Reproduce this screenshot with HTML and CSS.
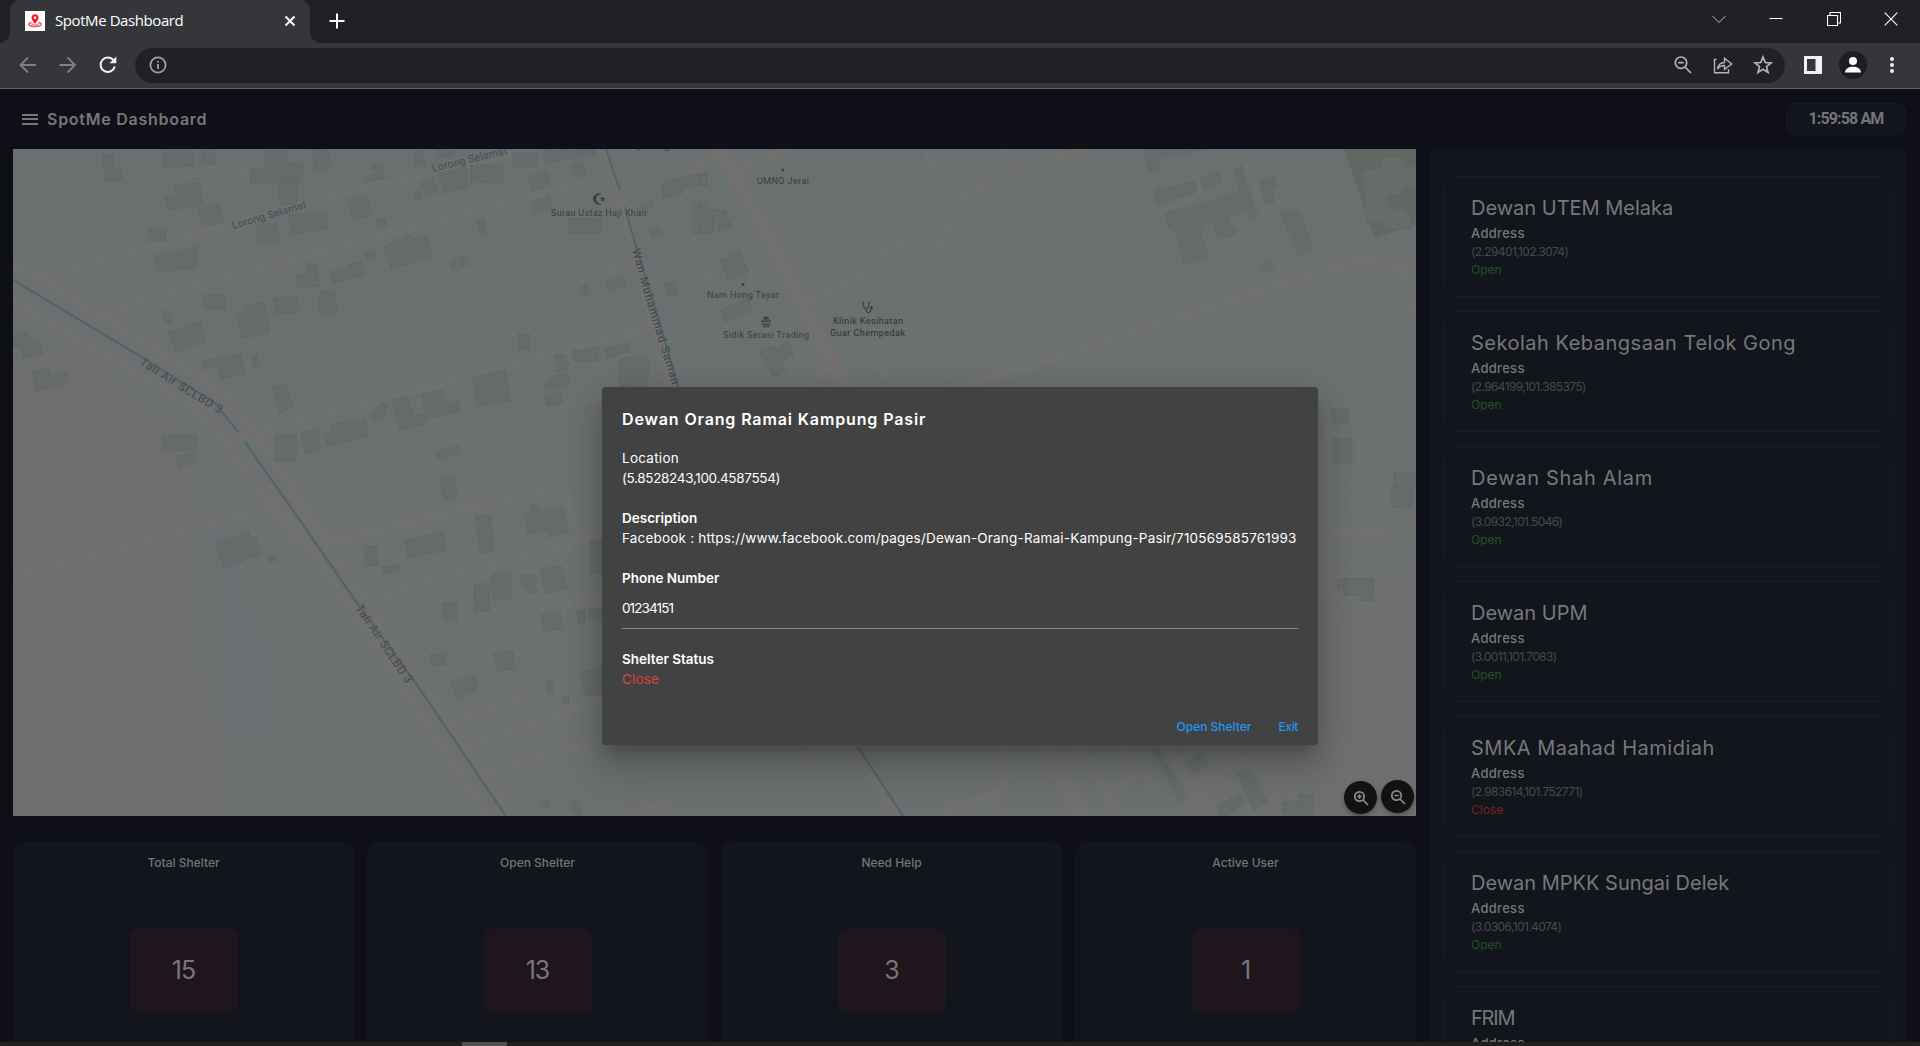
FILE: index.html
```html
<!DOCTYPE html>
<html lang="en">
<head>
<meta charset="utf-8">
<title>SpotMe Dashboard</title>
<link rel="stylesheet" href="styles.css">
</head>
<body>
<div class="browser">
  <div class="tabs">
    <div class="tab">
      <svg class="favicon" viewBox="0 0 20 20"><rect width="20" height="20" fill="#fff"/><path d="M6.6 11.4C2 12.6 3 15.6 10 15.6s8-3 3.4-4.200" fill="none" stroke="#f0484c" stroke-width="1.300"/><path d="M7.500 12.300c-2 .9-.5 1.700 2.500 1.700s4.500-.8 2.500-1.700" fill="none" stroke="#f0484c"/><path d="M10 13C7.800 9.800 6.500 8.500 6.500 6.700a3.500 3.500 0 0 1 7 0C13.500 8.500 12.200 9.800 10 13z" fill="#ee1c23"/><circle cx="10" cy="6.700" r="1.300" fill="#fff"/></svg>
      <span class="tab-title">SpotMe Dashboard</span>
      <svg class="tab-close" viewBox="0 0 12 12"><path d="M1.500 1.500l9 9M10.500 1.500l-9 9"/></svg>
      <i class="curve curve-left"></i><i class="curve curve-right"></i>
    </div>
    <svg class="plus" viewBox="0 0 16 16"><path d="M8 .5v15M.5 8h15"/></svg>
    <div class="window-buttons">
      <svg class="thin" viewBox="0 0 14 14"><path d="M.5 4l6.500 6.500L13.500 4"/></svg>
      <svg viewBox="0 0 14 14"><path d="M.5 6.500h13"/></svg>
      <svg viewBox="0 0 14 14"><path d="M.5 3.500h10v10h-10zM3 3V.5h10.500V11H11"/></svg>
      <svg viewBox="0 0 14 14"><path d="M.7.7l12.600 12.600M13.300.7L.7 13.300"/></svg>
    </div>
  </div>
  <div class="toolbar">
    <svg class="nav dim" viewBox="0 0 20 20"><path d="M18 10H3M10 2.500L2.500 10l7.500 7.500"/></svg>
    <svg class="nav dim" viewBox="0 0 20 20"><path d="M1.500 10h15M9.500 2.500L17 10l-7.500 7.500"/></svg>
    <svg class="nav" viewBox="0 0 20 20"><path d="M16.800 11.500a7.200 7.200 0 1 1-1.300-6.200" stroke-width="2"/><path d="M18.300 1.500v6.800h-6.800z" fill="#f1f1f1" stroke="none"/></svg>
    <div class="address">
      <svg class="info" viewBox="0 0 18 18"><circle cx="9" cy="9" r="7.600"/><path d="M9 8v5M9 5v1.600"/></svg>
      <div class="address-actions">
        <svg viewBox="0 0 20 20"><circle cx="8" cy="7.700" r="5.700"/><path d="M5.300 7.700h5.400M12 12l6 6"/></svg>
        <svg viewBox="0 0 20 20"><path d="M3.500 4.500h-2v13.300h14v-3.500M4.500 14c.6-4.200 3-6.300 7-6.500V3.200L18.700 9l-7.200 5.300v-3.800c-3 .1-5.200 1-7 3.500z" stroke-width="1.400"/></svg>
        <svg viewBox="0 0 20 20"><path d="M10 2l2.200 5.500 5.900.4-4.600 3.700 1.500 5.800-5-3.200-5 3.200 1.500-5.800L1.900 7.900l5.900-.4z"/></svg>
      </div>
    </div>
    <svg class="panel-icon" viewBox="0 0 18 18"><path d="M0 0h18v18H0z" fill="#f1f1f1"/><path d="M3 3h8.500v12H3z" fill="#35363a"/></svg>
    <svg class="profile" viewBox="0 0 28 28"><circle cx="14" cy="14" r="14" fill="#1d1e21"/><circle cx="14" cy="10" r="4" fill="#fff"/><path d="M6 21.500c0-7.700 16-7.700 16 0z" fill="#fff"/></svg>
    <svg class="dots" viewBox="0 0 6 18"><circle cx="3" cy="3" r="2"/><circle cx="3" cy="9" r="2"/><circle cx="3" cy="15" r="2"/></svg>
  </div>

  <div class="page">
    <header class="header">
      <i class="burger"></i>
      <h1 class="brand">SpotMe Dashboard</h1>
      <div class="clock">1:59:58 AM</div>
    </header>
    <main class="content">
      <section class="left">
        <div class="map">
          <svg class="map-canvas" viewBox="13 149 1403 667">
            <defs>
              <linearGradient id="land" x1="0" y1="0" x2="0" y2="1"><stop offset="0" stop-color="#6a6f6f"/><stop offset=".7" stop-color="#6b7071"/><stop offset="1" stop-color="#6b6f70"/></linearGradient>
              <linearGradient id="west" x1="0" y1="0" x2="1" y2="0"><stop offset="0" stop-color="#6e6e70"/><stop offset=".35" stop-color="#6d6e70"/><stop offset="1" stop-color="#6d6e70" stop-opacity="0"/></linearGradient>
              <linearGradient id="east" x1="0" y1="0" x2="0" y2="1"><stop offset="0" stop-color="#6e6f71" stop-opacity="0"/><stop offset=".4" stop-color="#6e6f71"/><stop offset="1" stop-color="#6e6f71"/></linearGradient>
            </defs>
            <rect x="13" y="149" width="1403" height="667" fill="url(#land)"/>
            <path d="M13 365L75 345 190 430 330 816H13z" fill="url(#west)"/>
            <rect x="1180" y="480" width="236" height="336" fill="url(#east)"/>

            <g class="roads">
              <g transform="translate(0 140) scale(.4592 .33333)">
                <path class="r9" d="M90 410L330 320 720 170 1180 20"/>
                <path class="r9" d="M215 530L330 470 850 280 1330 105"/>
                <path class="r10" d="M0 350L110 435 300 597 470 745Q510 785 545 860L715 1205"/>
                <path class="r10" d="M0 460L130 567 390 775 470 860 640 1205"/>
                <path class="r9" d="M510 892L800 790 1420 560"/>
                <path class="r8" d="M525 10L541 230M380 118Q430 92 520 75M955 260L978 375M1190 390Q1250 358 1290 400Q1360 385 1375 330"/>
                <path class="r10" d="M1305 0L1365 250 1465 760"/>
                <path class="r6" d="M1565 60L1350 185M28 680Q140 650 165 605M1535 385L1570 480"/>
                <path class="r8" d="M1230 800L1320 775M300 1205L600 1105M740 1205L1190 1050Q1230 1040 1240 1090L1265 1205"/>
              </g>
              <g transform="translate(0 500) scale(.4592 .33333)">
                <path class="r10" d="M637 -10L1125 960M590 -30L1070 960"/>
                <path class="r9" d="M0 240L600 20M720 118L1060 5M820 300Q920 235 1080 190L1330 105M1240 310L1320 285M990 660L1160 580M1020 730Q1190 670 1320 590M1070 820Q1170 760 1280 735M1330 960L1450 915"/>
              </g>
              <g transform="translate(700 140) scale(.4592 .33333)">
                <path class="main-road" d="M35 0L170 350 320 760"/>
                <path class="r9" d="M80 90L200 20M-20 80L40 50M490 20L510 95M660 20L675 90M850 25L675 90 550 190Q543 300 513 320M235 485L345 410 365 365 455 300"/>
                <path class="r10" d="M540 750L700 685 1270 430 1430 365Q1470 350 1510 385L1568 360M1530 385L1548 505"/>
                <path class="r6" d="M130 210L205 170 208 130M150 255L195 232M170 255L190 320Q210 340 240 300Q250 270 230 240M200 385L308 308M425 408L480 372Q500 370 505 400L525 470M285 640L470 520 625 410 730 355 900 265 958 235M728 370L742 440M808 320L825 392M903 275L942 432M925 345L955 322M545 470Q550 520 575 500L600 490Q630 510 637 605L572 648M630 410L700 680M465 520Q480 560 440 585L365 630 400 705M405 435L330 475Q310 490 320 520M120 320Q85 340 115 410Q115 440 85 430M195 570Q215 620 210 650Q230 670 280 650M270 690Q240 720 265 760M0 380L30 470"/>
                <path class="r6" d="M960 20L975 90M1170 45Q1190 60 1200 110L1275 425M1165 45L1000 115Q970 140 978 170L1030 390Q1035 415 1070 405L1245 322M990 218L1090 165 1080 90M1200 100L1250 85Q1275 140 1270 175L1225 210M1115 320L1230 260"/>
              </g>
              <g transform="translate(1300 380) scale(.33333)">
                <path class="r9" d="M85 120Q70 350 80 500Q90 640 102 720M70 460Q250 460 360 435"/>
              </g>
              <g transform="translate(700 730) scale(.4655 .33333)">
                <path class="main-road" d="M730 20L825 270"/>
                <path class="r9" d="M305 10L430 270M655 20V140Q655 180 600 210L500 265M620 205L650 265M810 40L910 270M900 30L975 170M990 20L1100 270M1080 150L1220 50M1235 30L1232 270M875 185L935 130M210 80L310 40"/>
              </g>
            </g>

            <g class="buildings">
              <g transform="translate(0 140) scale(.4592 .33333)">
                <path d="M222 45l24-3 3 45 16 5 2 27-37 6zM355 20h66v57l-66 3zM438 20h30l2 54-30-8zM575 34l52-4v40l33 2-3 55-113 2 3-43 29-2zM676 30l37-8 9 60-35 8zM811 70l22 2v22l-22-2zM797 107l34-12 8 20-43 8zM360 173l24-5-3-30 54-9 6 65-77 18zM431 205l46-13 12 55-47 13zM608 128l42 2-5 65-36-4zM560 255l44-4 4 58-46 4zM628 225l84-9 2 50-80 16zM758 182l43-17 10 58-43 19zM325 268h36v36h-36zM338 348l90-30 3 44-6 28-30-4-52 12zM820 240l18-3 3 24-19 3zM835 323l54-40 10 15 30-10 13 57-89 44zM797 335h20l2 24h-23zM900 38l20-5 6 40-22 8zM950 25h38v26l-38 2zM957 98l58-18 5 62-55 18zM918 130l25-16 11 40-25 14zM900 155l15-3 3 22-14 5zM1025 76l70-3-1 53h-70zM1116 40l52-2v40l-52 4zM1150 112l40-20 10 40-40 22zM1240 76l26-14 10 34-20 16zM1186 30h112v10l-108 28zM1158 185l38-15 7 35-40 16zM1038 240l16-3 3 45h-15zM1240 235h68v46h-68zM980 368l15-10-5 28h-10zM1000 350l14-6 6 30-18 5zM645 405l20-5 3-28h24l2 65-45 6zM718 397l40-14v-8l30-12 8 40-72 28zM443 466l48-2v42l-46 1zM515 520l16-3 1-20 44-11 12 92-62 18zM596 475l52-3 3 45-52 4zM691 480l7-25 30-6 7 72-37 9zM355 515l15-5 5 34-15 4zM366 577l70-34 12 60-66 32zM440 663l85-20 9 60-52 14-10-40-31 10zM549 650l12-8 4 36-12 8zM593 742l30-13 16 73-30 18zM28 588l30-14 10 27 20 2 6 38-45 14-3-35-18 2zM70 697l36-11 4 18 35-7 3 35-69 22zM354 888l74-3-1 45-73 3zM382 950l42-14 4 30-38 15zM600 886l46-5-1 80-45 4zM655 880l35-14 10 66-35 10zM708 885l17-3-3-30 74-16 5 55-90 27zM806 830l25-42 13 3-10 52-25-10zM855 780l33-16 12 62 24-4 3 30-56 18zM918 765l42-16 10 42 29-10 3 32-74 24zM1028 715l73-26 9 95-70 14zM1129 583h25v43h-25zM1210 645h18v20h10l-2 28-24 3zM1248 633l55-13v42l-53 3zM1315 625l54-16 5 26-52 20zM1350 655l62-8v75l-8 18h-55zM1184 735l16-25 38-10 2 35-53 18zM1187 765l34-10 5 35-36 8zM1263 442l14-8 8 25-15 10zM1320 425l37-20 7 32-37 18zM948 936l51-18 3 22-48 20zM957 1015l34-8 4 65-30 6zM1448 432l20-6 6 40-20 4zM1440 130l30-15 70-15v35l-50 5-5 22-42 12zM1385 205l35-26v20l-30 20zM1415 270l24-6 4 22-24 6zM1510 185l30 3-3 35 18 3v50l-45 6z"/>
              </g>
              <g transform="translate(0 500) scale(.4592 .33333)">
                <path d="M468 127l74-31 5 20 12-2 11 48-82 42zM582 175l18-8 4 16-17 6zM793 138h28v60h-28zM880 121l85-24 6 54-82 22zM830 202l40-10 3 20-40 9zM1035 50l34-4 8 110-32 4zM1144 47l12-3v-28l16-6 4 25 50-17 13 80-45 14-3-20-42 8zM1285 120h30v100h-30zM1175 208l48-12 12 72-48 12zM1070 222l42-3v77l-40 4zM1032 254l34-4v83h-34zM1132 228l32-3 4 52-20 2v-20l-13-4zM964 308l31 2v50h-31zM1178 345l44-10 4 52-43 8zM1256 332h18v35l-14 2zM1282 328h30v28h-30zM937 464l33-3v34l-31 2zM1075 460l42-6 6 53-38 8zM980 548l50-24 12 40-45 32zM1190 542l14 1v35l-12-2zM1263 518l47-18v80l-35 8zM1225 594l14-3v18l-12 4zM1176 904l20-4v24l-16 3zM1238 910l15-14 15 42-12 8z"/>
              </g>
              <g transform="translate(700 140) scale(.4592 .33333)">
                <path d="M0 105h16v30H0zM0 185h14v25h43v25H28v45H0zM36 248l20-18 14 25-28 20zM43 360l44-24 18 58-44 26zM43 512l62-38 8 38-60 34zM130 638l27-20 8 10 28-24 10 38-24 22 8 28-27 20zM965 40V27h140l-102 25-2 40-25 4zM989 152l90-30 4 32-88 38zM1090 112l38-18 8 30-38 18zM1010 222l165-67 12 58-38 20 5 30 12-2 5 20-40 14-17-50-27 12 18 90-50 30-22-110-12-3zM1163 90l15-12 35 152-15 12zM1218 125l32-16 7 30-14 6 10 45-20 5zM1262 215l20-10 5 15 18-10 30 118-32 18zM1218 374l20-14 10 26-20 15z"/>
                <path class="park" d="M1402 27h166v222l-98 46z"/>
                <path class="lot" d="M1442 90l40-5v-33h52v28l34-4v66l-36 3v20h-32v44l30-5 18 20v42l-55 3-15-24-25 8z"/>
              </g>
              <g transform="translate(1300 380) scale(.33333)">
                <path d="M94 88h50v43H98zM98 175h58v75h-58zM282 277h66v43h-66zM275 322l66 4-4 60-62-5zM112 597h18v32h-18zM132 595h90v67h-41v-15h-49zM0 1245h38l-5 65H0z"/>
              </g>
              <g transform="translate(700 730) scale(.4655 .33333)">
                <path d="M967 60l15-8 12 48 8-2 46 100-18 18-42-115zM1042 98l34-32 17 38-30 28zM1155 130l25-16 40 100-30 28-12-32zM1110 228l48-38 15 28-40 38h-15zM1250 216l36-2 2-20 30 5-3 60-65-8z"/>
              </g>
            </g>

            <g class="river">
              <path d="M13 280L138 355 215 403 238 432M245 442L315 542 357 603 415 682 506 816M606 149L620 191M625 207L637 250 656 310 678 387M858 747L903 816"/>
            </g>

            <g class="labels">
              <text class="street" x="233" y="229" transform="rotate(-16 233 229)" textLength="77">Lorong Selamat</text>
              <text class="street" x="433" y="172" transform="rotate(-14 433 172)" textLength="77">Lorong Selamat</text>
              <path id="tali1" fill="none" d="M139 364L190 396 230 420"/>
              <path id="tali2" fill="none" d="M355 608L380 645 412 692"/>
              <path id="wan" fill="none" d="M632 250L648 307 674 390"/>
              <text class="water"><textPath href="#tali1" textLength="95">Tali Air SCLBD 3</textPath></text>
              <text class="water"><textPath href="#tali2" textLength="92">Tali Air SCLBD 3</textPath></text>
              <text class="way"><textPath href="#wan" textLength="141">Wan Muhammad Saman</textPath></text>
              <text class="poi" x="551" y="216" textLength="96">Surau Ustaz Haji Khair</text>
              <text class="poi" x="627" y="149" textLength="70">Tays Seng Motor</text>
              <text class="poi" x="757" y="184" textLength="52">UMNO Jerai</text>
              <text class="poi" x="707" y="298" textLength="72">Nam Hong Tayar</text>
              <text class="poi" x="723" y="338" textLength="86">Sidik Serasi Trading</text>
              <text class="poi strong" x="833" y="324" textLength="70">Klinik Kesihatan</text>
              <text class="poi strong" x="830" y="336" textLength="75">Guar Chempedak</text>
              <circle cx="783" cy="170" r="1.500"/><circle cx="743" cy="284.500" r="1.500"/>
              <path d="M602 194.500a5.500 5.500 0 1 0 0 9 4.700 4.700 0 1 1 0-9zM602.500 196l.8 2 2 .1-1.500 1.300.5 2-1.800-1-1.700 1 .5-2-1.500-1.300 2-.1z"/>
              <path d="M761 320.500h10v1.500h-10zM762 323h1.400v4.500H763zM764.200 323h1.200v4.500h-1.200zM766.400 323h1.200v4.500h-1.200zM768.600 323h1.400l-1 4.500h-.6zM763 319.500c0-4 6-4 6 0z"/>
              <path d="M864 302.500h-1c0 4 .8 6 3 6s3-2 3-6h-1M866 308.500c0 3 1 4 2.500 4s2.500-1.500 2.500-4" fill="none" stroke="#3b3d3e" stroke-width="1.200"/><circle cx="871.500" cy="307.500" r="1.500"/>
            </g>
          </svg>
          <div class="zoom-controls">
            <span class="zoom-button"><svg viewBox="0 0 16 16"><circle cx="6.500" cy="6.500" r="4.700"/><path d="M4.300 6.500h4.400M6.500 4.300v4.400M10 10l5 5"/></svg></span>
            <span class="zoom-button raised"><svg viewBox="0 0 16 16"><circle cx="6.500" cy="6.500" r="4.700"/><path d="M4.300 6.500h4.400M10 10l5 5"/></svg></span>
          </div>
        </div>
        <div class="stats">
          <article class="stat"><h2 class="stat-title">Total Shelter</h2><div class="stat-value">15</div></article>
          <article class="stat"><h2 class="stat-title">Open Shelter</h2><div class="stat-value">13</div></article>
          <article class="stat"><h2 class="stat-title">Need Help</h2><div class="stat-value">3</div></article>
          <article class="stat"><h2 class="stat-title">Active User</h2><div class="stat-value">1</div></article>
        </div>
      </section>
      <aside class="shelters">
        <article class="shelter"><h3>Dewan UTEM Melaka</h3><h4>Address</h4><p class="coords">(2.29401,102.3074)</p><p class="open">Open</p></article>
        <article class="shelter"><h3 class="wide">Sekolah Kebangsaan Telok Gong</h3><h4>Address</h4><p class="coords">(2.964199,101.385375)</p><p class="open">Open</p></article>
        <article class="shelter"><h3 class="wider">Dewan Shah Alam</h3><h4>Address</h4><p class="coords">(3.0932,101.5046)</p><p class="open">Open</p></article>
        <article class="shelter"><h3>Dewan UPM</h3><h4>Address</h4><p class="coords">(3.0011,101.7083)</p><p class="open">Open</p></article>
        <article class="shelter"><h3 class="wide">SMKA Maahad Hamidiah</h3><h4>Address</h4><p class="coords">(2.983614,101.752771)</p><p class="closed">Close</p></article>
        <article class="shelter"><h3>Dewan MPKK Sungai Delek</h3><h4>Address</h4><p class="coords">(3.0306,101.4074)</p><p class="open">Open</p></article>
        <article class="shelter"><h3 class="narrow">FRIM</h3><h4>Address</h4></article>
      </aside>
    </main>
  </div>
  <div class="scrollbar"><i class="thumb"></i></div>

  <div class="overlay">
    <div class="dialog">
      <h2 class="dialog-title">Dewan Orang Ramai Kampung Pasir</h2>
      <dl class="fields">
        <div><dt class="location">Location</dt><dd class="position">(5.8528243,100.4587554)</dd></div>
        <div><dt>Description</dt><dd class="description">Facebook : https://www.facebook.com/pages/Dewan-Orang-Ramai-Kampung-Pasir/710569585761993</dd></div>
        <div><dt>Phone Number</dt><dd class="phone">01234151</dd></div>
        <div><dt>Shelter Status</dt><dd class="status">Close</dd></div>
      </dl>
      <div class="actions"><span>Open Shelter</span><span class="exit">Exit</span></div>
    </div>
  </div>
</div>
</body>
</html>
```
FILE: styles.css
```css
* { box-sizing: border-box; }
body { margin: 0; background: #0f0f18; font-family: Inter, "Open Sans", sans-serif; overflow: hidden; }
h1, h2, h3, h4, p, dl, dd, dt { margin: 0; font-weight: 400; }
svg { display: block; flex: none; fill: none; }

.browser { display: flex; flex-direction: column; width: 1920px; height: 1046px; }

/* Tab strip */
.tabs { display: flex; align-items: flex-start; height: 43px; padding-left: 10px; background: #202124; flex: none; }
.tab { position: relative; display: flex; align-items: center; width: 300px; height: 43px; padding: 0 14px 1px 15px; border-radius: 10px 10px 0 0; background: #35363a; }
.favicon { width: 20px; height: 20px; }
.tab-title { margin: -2px auto 0 10px; color: #fff; font: 15px/20px "Open Sans", sans-serif; letter-spacing: -.42px; }
.tab-close { width: 12px; height: 12px; stroke: #fff; stroke-width: 2; }
.curve { position: absolute; bottom: 0; width: 10px; height: 10px; }
.curve-left { left: -10px; background: radial-gradient(circle at 0 0, #202124 9.5px, #35363a 10px); }
.curve-right { right: -10px; background: radial-gradient(circle at 100% 0, #202124 9.5px, #35363a 10px); }
.plus { width: 16px; height: 16px; margin: 13px 0 0 19px; stroke: #fff; stroke-width: 2; }
.window-buttons { display: flex; gap: 43.5px; margin: 12px 22px 0 auto; }
.window-buttons svg { width: 14px; height: 14px; stroke: #fff; stroke-width: 1.1; }
.window-buttons .thin { stroke: #bbb; stroke-width: 1; }

/* Toolbar */
.toolbar { display: flex; align-items: center; height: 46px; padding: 0 25px 1px 18px; background: #35363a; border-bottom: 1px solid #626366; flex: none; }
.nav { width: 20px; height: 20px; margin-right: 20px; stroke: #f1f1f1; stroke-width: 1.8; }
.nav.dim { stroke: #808185; }
.address { display: flex; align-items: center; justify-content: space-between; width: 1650px; height: 35px; margin-left: -3px; padding: 0 12px 0 13.5px; border-radius: 18px; background: #202124; }
.info { width: 18px; height: 18px; stroke: #9aa0a6; stroke-width: 1.8; }
.address-actions { display: flex; gap: 20px; }
.address-actions svg { width: 20px; height: 20px; stroke: #b4b5b8; stroke-width: 1.7; }
.panel-icon { width: 18px; height: 18px; margin-left: 19px; }
.profile { width: 28px; height: 28px; margin-left: 17px; }
.dots { width: 6px; height: 18px; margin-left: 22px; fill: #f1f1f1; }

/* Dashboard shell */
.page { flex: 1; min-height: 0; overflow: hidden; background: #0f0f18; }
.header { display: flex; align-items: center; height: 60px; padding: 0 14px 0 22px; }
.burger { width: 16px; height: 11px; border: solid #777; border-width: 2px 0; background: linear-gradient(#777, #777) center / 100% 2px no-repeat; }
.brand { margin: -1px auto 0 9px; color: #777; font-size: 16px; font-weight: 600; line-height: 20px; letter-spacing: .74px; }
.clock { display: flex; align-items: center; justify-content: center; width: 120px; height: 32px; border: 1px solid #191a22; border-radius: 9px; background: #12151c; color: #747474; font: 700 16px/20px Roboto, sans-serif; letter-spacing: -.87px; }
.content { display: flex; gap: 13.5px; padding-left: 13px; }
.left { width: 1403px; }
.map { position: relative; height: 667px; }
.map-canvas { width: 1403px; height: 667px; }

/* Map layers */
.roads path { fill: none; stroke: #70716f; stroke-linejoin: round; stroke-linecap: round; vector-effect: non-scaling-stroke; }
.roads .r10 { stroke-width: 10px; }
.roads .r9 { stroke-width: 8.5px; }
.roads .r8 { stroke-width: 7.5px; }
.roads .r6 { stroke-width: 5px; }
.roads .main-road { stroke: #716f70; stroke-width: 17px; }
.buildings path { fill: #656a6a; stroke: #5e6364; stroke-width: .8px; stroke-dasharray: 3 2; vector-effect: non-scaling-stroke; }
.buildings .park { fill: #616763; stroke: none; }
.buildings .lot { fill: #666c6b; }
.river path { stroke: #566269; stroke-width: 2.2px; }
.labels { fill: #3b3d3e; font-family: Roboto, sans-serif; }
.labels text { paint-order: stroke; stroke: #6d7071; stroke-width: 1.5px; }
.labels .water, .labels .way { stroke-width: .4px; }
.street { fill: #3c5053; font-size: 10.5px; }
.water { fill: #47494b; font-size: 12px; }
.way { fill: #424547; font-size: 11.5px; }
.poi { font-size: 9px; }
.strong { fill: #2f3132; }
.zoom-controls { position: absolute; right: 2px; bottom: 2px; display: flex; gap: 4px; }
.zoom-button { display: flex; align-items: center; justify-content: center; width: 33px; height: 33px; border-radius: 50%; background: #121212; box-shadow: 0 2px 4px rgba(0, 0, 0, .3); }
.zoom-button.raised { margin-top: -1px; margin-bottom: 1px; }
.zoom-button svg { width: 16px; height: 16px; stroke: #8c8c8c; stroke-width: 1.7; }

/* Statistics */
.stats { display: flex; gap: 13px; margin-top: 26px; }
.stat { display: flex; flex-direction: column; align-items: center; flex: 1; height: 240px; padding-top: 11px; border-radius: 10px; background: #12151c; }
.stat-title { color: #737475; font-size: 12px; font-weight: 500; line-height: 20px; }
.stat-value { width: 108px; height: 83px; margin-top: 56px; border-radius: 8px; background: #1e161c; color: #77767a; font-size: 25px; line-height: 82px; text-align: center; letter-spacing: -1px; }

/* Shelter list */
.shelters { display: flex; flex-direction: column; gap: 14px; width: 477.5px; height: 960px; padding: 27px 13.5px; border-radius: 8px; background: #12151c; }
.shelter { flex: none; height: 121px; padding: 16px 27px; border: 1px solid #111e2e; border-radius: 14px; color: #77787a; }
.shelter h3 { font-size: 20px; line-height: 31px; }
.shelter .wide { letter-spacing: .5px; }
.shelter .wider { letter-spacing: .7px; }
.shelter .narrow { letter-spacing: -1.2px; }
.shelter h4 { font-size: 13px; font-weight: 500; line-height: 19px; letter-spacing: .3px; }
.shelter p { font-size: 12px; line-height: 17px; }
.shelter .coords { color: #48494c; letter-spacing: -.62px; line-height: 18px; }
.shelter .open { color: #245126; }
.shelter .closed { color: #7c2222; }

.scrollbar { height: 4px; padding-left: 462px; background: #1f1f20; flex: none; }
.thumb { display: block; width: 45px; height: 4px; background: #4f4f4f; }

/* Dialog */
.overlay { position: absolute; top: 89px; right: 0; bottom: 3px; left: 0; display: flex; align-items: center; justify-content: center; }
.dialog { width: 716px; height: 358px; padding: 20px; border-radius: 4px; background: #424242; color: #fff; box-shadow: 0 11px 15px -7px rgba(0, 0, 0, .2), 0 24px 38px 3px rgba(0, 0, 0, .14), 0 9px 30px 4px rgba(0, 0, 0, .12); }
.dialog-title { font-size: 16px; font-weight: 600; line-height: 24px; letter-spacing: .87px; }
.fields { display: flex; flex-direction: column; gap: 20px; margin-top: 17px; font-size: 13.5px; line-height: 20px; white-space: nowrap; }
.fields dt { font-weight: 600; }
.fields .location { font-weight: 400; letter-spacing: .26px; }
.position { letter-spacing: -.34px; }
.description { letter-spacing: .19px; }
.phone { height: 41px; padding-top: 10px; border-bottom: 1px solid #8b8b8b; letter-spacing: -.9px; }
.status { color: #dc4437; letter-spacing: .15px; }
.actions { display: flex; justify-content: flex-end; gap: 27px; margin-top: 28px; color: #2196f3; font-size: 12px; font-weight: 500; line-height: 20px; }
.exit { letter-spacing: -.38px; }
```
